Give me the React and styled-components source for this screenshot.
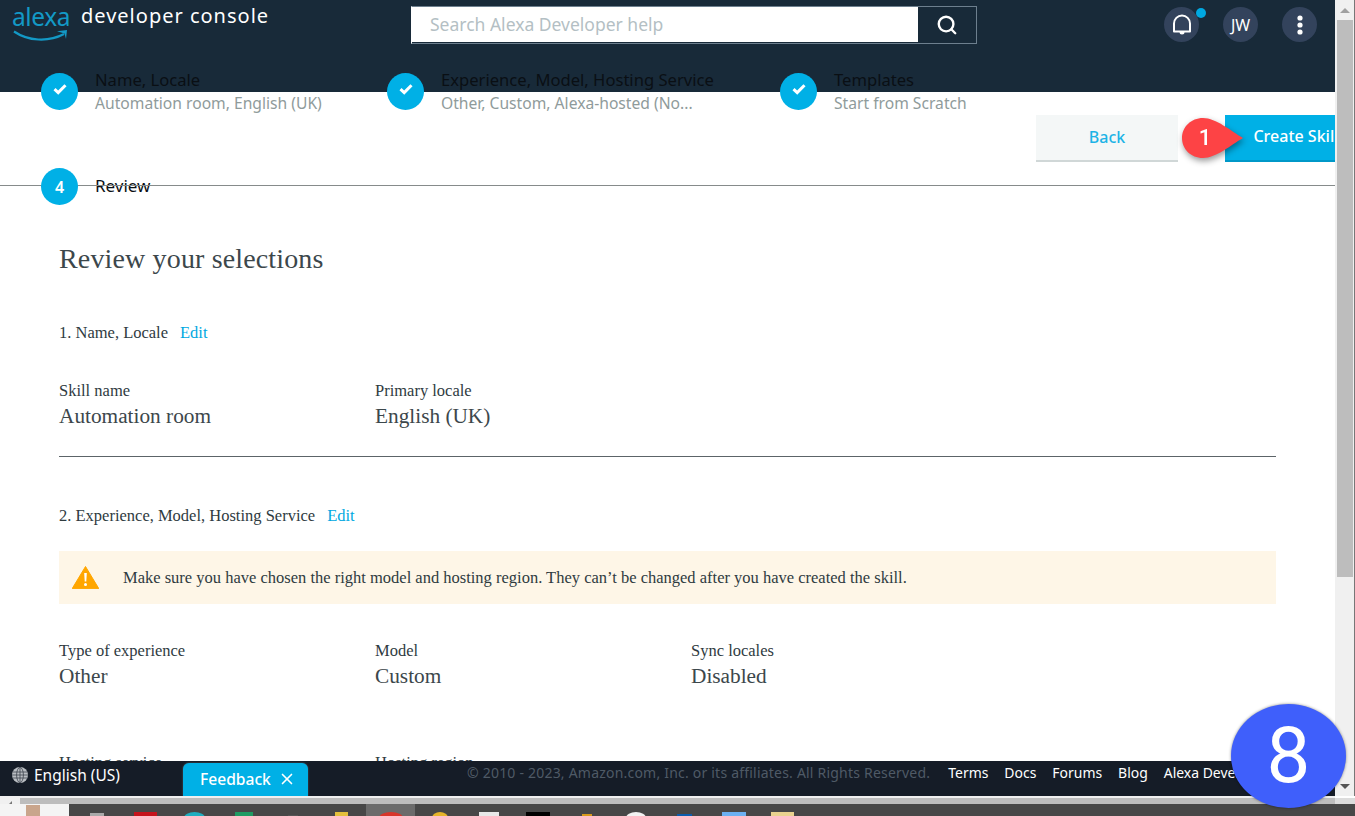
import React from "react";
import styled, { createGlobalStyle } from "styled-components";
import { Search, X } from "lucide-react";

const GlobalStyle = createGlobalStyle`
  html, body {
    margin: 0;
    padding: 0;
    background: #fff;
    overflow: hidden;
  }
  * {
    box-sizing: border-box;
  }
`;

const UI_FONT = `"Noto Sans", "Open Sans", sans-serif`;
const SERIF_FONT = `"Liberation Serif", serif`;

const Screen = styled.div`
  position: relative;
  width: 1355px;
  height: 816px;
  overflow: hidden;
  display: flex;
  flex-direction: column;
  font-family: ${UI_FONT};
`;

const Viewport = styled.div`
  flex: none;
  display: flex;
  height: 796px;
`;

const Page = styled.div`
  width: 1335px;
  display: flex;
  flex-direction: column;
  overflow: hidden;
`;

const Header = styled.header`
  flex: none;
  height: 92px;
  background: #182a39;
  display: flex;
  align-items: flex-start;
`;

const Logo = styled.div`
  position: relative;
  flex: none;
  width: 81px;
  padding-left: 12px;
  height: 44px;
  color: #1399c6;
  font-size: 24.5px;
  line-height: 34px;
  letter-spacing: -0.4px;
`;

const Smile = styled.svg`
  position: absolute;
  left: 12px;
  top: 28px;
`;

const ConsoleName = styled.div`
  flex: none;
  width: 330px;
  color: #fff;
  font-size: 20px;
  line-height: 32px;
  letter-spacing: 1px;
`;

const SearchBox = styled.div`
  margin-top: 6px;
  width: 566px;
  height: 38px;
  border: 1px solid #6d7f8e;
  border-left-color: #fff;
  display: flex;
`;

const SearchField = styled.div`
  width: 506px;
  height: 35px;
  background: #fff;
  color: #b4bfc4;
  font-size: 17.5px;
  line-height: 35px;
  padding-left: 18px;
`;

const SearchButton = styled.div`
  flex: 1;
  display: flex;
  align-items: center;
  justify-content: center;
  color: #fff;
`;

const HeaderTools = styled.div`
  margin-left: 187px;
  margin-top: 7px;
  display: flex;
  gap: 24px;
`;

const ToolButton = styled.div`
  position: relative;
  width: 35px;
  height: 35px;
  border-radius: 50%;
  background: #33435c;
  color: #fff;
  font-size: 16px;
  display: flex;
  align-items: center;
  justify-content: center;
`;

const NotifyDot = styled.span`
  position: absolute;
  top: 1px;
  right: -7px;
  width: 10px;
  height: 10px;
  border-radius: 50%;
  background: #00a8e1;
`;

const Stepper = styled.div`
  position: relative;
  flex: none;
  margin-top: -20px;
  height: 43px;
  padding-left: 41px;
  display: flex;
`;

const Step = styled.div`
  width: ${(p) => p.$width}px;
  display: flex;
  align-items: flex-start;
`;

const StepCircle = styled.div`
  flex: none;
  width: 37px;
  height: 37px;
  margin-top: 1px;
  border-radius: 50%;
  background: #00b0e6;
  color: #fff;
  font-size: 16px;
  font-weight: 600;
  display: flex;
  align-items: center;
  justify-content: center;
`;

const StepText = styled.div`
  margin-left: 17px;
  min-width: 0;
`;

const StepTitle = styled.div`
  color: #0a0f14;
  font-size: 16.6px;
  line-height: 24px;
  margin-top: -4px;
  white-space: nowrap;
`;

const StepDetail = styled.div`
  color: #8f9b9b;
  font-size: 15.65px;
  line-height: 23px;
  white-space: nowrap;
`;

const Actions = styled.div`
  position: relative;
  flex: none;
  height: 47px;
  margin-right: -32px;
  display: flex;
  justify-content: flex-end;
  gap: 47px;
`;

const ActionButton = styled.div`
  width: 142px;
  height: 47px;
  background: ${(p) => (p.$primary ? "#00b0e6" : "#f4f7f7")};
  border-bottom: 2px solid ${(p) => (p.$primary ? "#0098c8" : "#d0d7d7")};
  color: ${(p) => (p.$primary ? "#fff" : "#1cb3e6")};
  font-size: 16px;
  font-weight: 500;
  line-height: ${(p) => (p.$primary ? 42 : 44)}px;
  text-align: center;
`;

const Callout = styled.div`
  position: absolute;
  left: 1181px;
  top: 2px;
  width: 64px;
  height: 42px;
  filter: drop-shadow(1px 3px 3px rgba(0, 0, 0, 0.4));
`;

const CalloutNumber = styled.span`
  position: absolute;
  left: 16px;
  top: 5px;
  width: 16px;
  color: #fff;
  font-family: Roboto, sans-serif;
  font-size: 22px;
  font-weight: 500;
  line-height: 32px;
  text-align: center;
`;

const ReviewStep = styled.div`
  position: relative;
  flex: none;
  margin-top: 6px;
  height: 37px;
  padding-left: 41px;
  display: flex;
  align-items: center;

  &::after {
    content: "";
    position: absolute;
    left: 0;
    right: 0;
    top: 17px;
    height: 1px;
    background: #868b8b;
  }
`;

const ReviewStepLabel = styled.span`
  position: relative;
  margin: -2px 0 0 17px;
  color: #0a0f14;
  font-size: 17px;
`;

const FrontCircle = styled(StepCircle)`
  position: relative;
  z-index: 1;
  margin-top: 0;
`;

const Review = styled.main`
  flex: 1;
  min-height: 0;
  overflow: hidden;
  padding: 0 59px;
  font-family: ${SERIF_FONT};
  color: #2f3b3f;
`;

const ReviewTitle = styled.h1`
  margin: 36px 0 0;
  color: #3c474b;
  font-size: 28px;
  font-weight: 400;
  line-height: 36px;
  letter-spacing: 0.15px;
`;

const SectionHeading = styled.div`
  margin-top: ${(p) => p.$top}px;
  font-size: 16.5px;
  line-height: 20px;
  display: flex;
  gap: 12px;
`;

const EditLink = styled.a`
  color: #00a8e1;
  text-decoration: none;
`;

const FieldRow = styled.div`
  margin-top: ${(p) => p.$top}px;
  display: grid;
  grid-template-columns: repeat(3, 316px);
`;

const FieldLabel = styled.div`
  font-size: 16.5px;
  line-height: 22px;
`;

const FieldValue = styled.div`
  color: #3c474b;
  font-size: 21.3px;
  line-height: 29px;
`;

const Divider = styled.hr`
  margin: 25px 0 0;
  border: 0;
  border-top: 1px solid #5c6468;
`;

const Notice = styled.div`
  margin-top: 25px;
  height: 53px;
  background: #fef6e7;
  padding-left: 13px;
  display: flex;
  align-items: center;
  gap: 24px;
  font-size: 16.5px;
`;

const Footer = styled.footer`
  position: relative;
  flex: none;
  height: 35px;
  background: #151c27;
  display: flex;
  white-space: nowrap;
  overflow: hidden;
`;

const Language = styled.div`
  width: 183px;
  padding-left: 12px;
  height: 28px;
  display: flex;
  align-items: center;
  gap: 6px;
  color: #fff;
  font-size: 15.5px;
`;

const FeedbackTab = styled.div`
  align-self: flex-end;
  width: 125px;
  height: 33px;
  padding: 0 0 2px 17px;
  background: #00b0e6;
  border-radius: 6px 6px 0 0;
  box-shadow: 0 0 2px rgba(255, 255, 255, 0.3);
  color: #fff;
  font-size: 15.6px;
  font-weight: 500;
  display: flex;
  align-items: center;
  gap: 7px;
`;

const Copyright = styled.div`
  margin-left: 159px;
  height: 24px;
  line-height: 24px;
  color: #4f5a66;
  font-size: 14px;
  letter-spacing: 0.21px;
`;

const FooterLinks = styled.nav`
  margin-left: 18px;
  display: flex;
  gap: 16px;
`;

const FooterLink = styled.a`
  color: #fff;
  font-size: 13.95px;
  line-height: 24px;
  text-decoration: none;
`;

const VerticalScrollbar = styled.div`
  width: 20px;
  background: #f0f0f0;
  border-right: 1px solid #777;
  display: flex;
  flex-direction: column;
  align-items: center;
`;

const ScrollArrow = styled.span`
  flex: none;
  height: 20px;
  width: 100%;
  display: flex;
  align-items: center;
  justify-content: center;

  &::before {
    content: "";
    border-left: 5px solid transparent;
    border-right: 5px solid transparent;
    ${(p) => (p.$down ? "border-top: 5px solid #555;" : "border-bottom: 5px solid #a0a0a0;")}
  }
`;

const ScrollThumb = styled.div`
  flex: none;
  width: 16px;
  height: 557px;
  background: #bdbdbd;
`;

const ScrollSpacer = styled.div`
  flex: 1;
`;

const StripRow = styled.div`
  flex: none;
  height: 2px;
  width: 1335px;
  background: #f0f0f0;
`;

const HorizontalScrollbar = styled.div`
  flex: none;
  display: flex;
  height: 6px;
  background: #bdbdbd;
`;

const ScrollCorner = styled.div`
  flex: none;
  width: 20px;
  background: #f0f0f0;
  display: flex;
  align-items: flex-end;
  justify-content: center;

  &::before {
    content: "";
    border-bottom: 3px solid #777;
    border-left: 3px solid transparent;
  }
`;

const ScrollEnd = styled.div`
  flex: none;
  margin-left: auto;
  width: 20px;
  background: #dcdcdc;
`;

const Taskbar = styled.div`
  flex: 1;
  display: flex;
  background: #474747;
  overflow: hidden;
`;

const StartArea = styled.div`
  flex: none;
  width: 69px;
  margin-right: 3px;
  background: #f4f4f4;
  padding: 1px 0 0 26px;
`;

const TaskTile = styled.div`
  flex: none;
  width: 49px;
  padding-top: ${(p) => p.$offset}px;
  display: flex;
  justify-content: center;
  background: ${(p) => (p.$active ? "#6b6b6b" : "transparent")};
`;

const TaskIcon = styled.span`
  display: block;
  width: ${(p) => p.$size}px;
  height: 12px;
  background: ${(p) => p.$color};
  border-radius: ${(p) => (p.$round ? "50% 50% 0 0" : "0")};
`;

const Badge = styled.div`
  position: absolute;
  left: 1231px;
  top: 704px;
  width: 115px;
  height: 104px;
  border-radius: 50%;
  background: #3f5ffb;
  box-shadow: 0 0 3px rgba(0, 0, 0, 0.45);
  color: #fff;
  font-family: Roboto, sans-serif;
  font-size: 78px;
  line-height: 104px;
  text-align: center;
`;

const CheckMark = () => (
  <svg width="14" height="12" viewBox="0 0 14 12" style={{ marginTop: -5 }}>
    <path d="M1.5 6.2 5.2 9.6 12.5 2.2" fill="none" stroke="#fff" strokeWidth="3" />
  </svg>
);

const Bell = () => (
  <svg width="20" height="22" viewBox="0 0 20 22">
    <path
      d="M2 17.5V9.5a8 8 0 0 1 16 0v8z"
      fill="none"
      stroke="#fff"
      strokeWidth="2"
      strokeLinejoin="round"
    />
    <path d="M7.500 18h5a2.500 2.500 0 0 1-5 0z" fill="#fff" />
  </svg>
);

const MoreDots = () => (
  <svg width="8" height="20" viewBox="0 0 8 20">
    <circle cx="4" cy="3" r="2.6" fill="#fff" />
    <circle cx="4" cy="10" r="2.6" fill="#fff" />
    <circle cx="4" cy="17" r="2.6" fill="#fff" />
  </svg>
);

const Globe = () => (
  <svg width="16" height="16" viewBox="0 0 16 16">
    <circle cx="8" cy="8" r="8" fill="#b9bdc2" />
    <g fill="none" stroke="#3d444e" strokeWidth="0.8">
      <ellipse cx="8" cy="8" rx="3.4" ry="7.6" />
      <path d="M8 0v16M0.6 5h14.8M0.6 11h14.8M0 8h16" />
    </g>
  </svg>
);

const WarningIcon = () => (
  <svg width="27" height="23" viewBox="0 0 27 23">
    <path d="M13.5 0.5 26.8 22.6H0.2z" fill="#ffa600" stroke="#ffa600" strokeLinejoin="round" />
    <path d="M12.2 7h2.6l-.5 8.6h-1.6z" fill="#fff" />
    <circle cx="13.5" cy="18.4" r="1.5" fill="#fff" />
  </svg>
);

const taskIcons = [
  { size: 14, color: "#a9a9a9", offset: 9 },
  { size: 23, color: "#c5131c", offset: 8 },
  { size: 21, color: "#1eaec0", offset: 8, round: true },
  { size: 18, color: "#1f9b63", offset: 8 },
  { size: 10, color: "#555", offset: 11 },
  { size: 13, color: "#e3bf3b", offset: 8 },
  { size: 24, color: "#d8352a", offset: 8, round: true, active: true },
  { size: 16, color: "#e6b42a", offset: 8, round: true },
  { size: 20, color: "#e8e8e8", offset: 8 },
  { size: 24, color: "#000", offset: 8 },
  { size: 10, color: "#d89a1c", offset: 10 },
  { size: 20, color: "#f2f2f2", offset: 8, round: true },
  { size: 15, color: "#0b5cad", offset: 10 },
  { size: 24, color: "#6bb0f2", offset: 8 },
  { size: 23, color: "#e9d28f", offset: 8 },
];

const footerLinks = ["Terms", "Docs", "Forums", "Blog", "Alexa Developer"];

export default function App() {
  return (
    <Screen>
      <GlobalStyle />
      <Viewport>
        <Page>
          <Header>
            <Logo>
              alexa
              <Smile width="56" height="14" viewBox="0 0 56 14">
                <path d="M2 3.500C16 13 36 14.500 52 6" fill="none" stroke="#1399c6" strokeWidth="2.2" />
                <path d="M45 3.200 55 2 54 11 52.500 5.500z" fill="#1399c6" />
              </Smile>
            </Logo>
            <ConsoleName>developer console</ConsoleName>
            <SearchBox>
              <SearchField>Search Alexa Developer help</SearchField>
              <SearchButton>
                <Search size={22} strokeWidth={2.6} />
              </SearchButton>
            </SearchBox>
            <HeaderTools>
              <ToolButton>
                <Bell />
                <NotifyDot />
              </ToolButton>
              <ToolButton>JW</ToolButton>
              <ToolButton>
                <MoreDots />
              </ToolButton>
            </HeaderTools>
          </Header>

          <Stepper>
            <Step $width={346}>
              <StepCircle>
                <CheckMark />
              </StepCircle>
              <StepText>
                <StepTitle>Name, Locale</StepTitle>
                <StepDetail>Automation room, English (UK)</StepDetail>
              </StepText>
            </Step>
            <Step $width={393}>
              <StepCircle>
                <CheckMark />
              </StepCircle>
              <StepText>
                <StepTitle>Experience, Model, Hosting Service</StepTitle>
                <StepDetail>Other, Custom, Alexa-hosted (No...</StepDetail>
              </StepText>
            </Step>
            <Step $width={300}>
              <StepCircle>
                <CheckMark />
              </StepCircle>
              <StepText>
                <StepTitle>Templates</StepTitle>
                <StepDetail>Start from Scratch</StepDetail>
              </StepText>
            </Step>
          </Stepper>

          <Actions>
            <ActionButton>Back</ActionButton>
            <ActionButton $primary>Create Skill</ActionButton>
            <Callout>
              <svg width="64" height="42" viewBox="0 0 64 42">
                <path
                  d="M22 1C35 1 50 14 62 21 50 28 35 41 22 41 10 41 1 32 1 21S10 1 22 1z"
                  fill="#fd4345"
                />
              </svg>
              <CalloutNumber>1</CalloutNumber>
            </Callout>
          </Actions>

          <ReviewStep>
            <FrontCircle>4</FrontCircle>
            <ReviewStepLabel>Review</ReviewStepLabel>
          </ReviewStep>

          <Review>
            <ReviewTitle>Review your selections</ReviewTitle>

            <SectionHeading $top={46}>
              1. Name, Locale <EditLink href="#">Edit</EditLink>
            </SectionHeading>
            <FieldRow $top={37}>
              <div>
                <FieldLabel>Skill name</FieldLabel>
                <FieldValue>Automation room</FieldValue>
              </div>
              <div>
                <FieldLabel>Primary locale</FieldLabel>
                <FieldValue>English (UK)</FieldValue>
              </div>
            </FieldRow>
            <Divider />

            <SectionHeading $top={49}>
              2. Experience, Model, Hosting Service <EditLink href="#">Edit</EditLink>
            </SectionHeading>
            <Notice>
              <WarningIcon />
              Make sure you have chosen the right model and hosting region. They can’t be changed
              after you have created the skill.
            </Notice>
            <FieldRow $top={36}>
              <div>
                <FieldLabel>Type of experience</FieldLabel>
                <FieldValue>Other</FieldValue>
              </div>
              <div>
                <FieldLabel>Model</FieldLabel>
                <FieldValue>Custom</FieldValue>
              </div>
              <div>
                <FieldLabel>Sync locales</FieldLabel>
                <FieldValue>Disabled</FieldValue>
              </div>
            </FieldRow>
            <FieldRow $top={61}>
              <FieldLabel>Hosting service</FieldLabel>
              <FieldLabel>Hosting region</FieldLabel>
            </FieldRow>
          </Review>

          <Footer>
            <Language>
              <Globe />
              English (US)
            </Language>
            <FeedbackTab>
              Feedback
              <X size={18} strokeWidth={2.2} />
            </FeedbackTab>
            <Copyright>© 2010 - 2023, Amazon.com, Inc. or its affiliates. All Rights Reserved.</Copyright>
            <FooterLinks>
              {footerLinks.map((link) => (
                <FooterLink href="#" key={link}>
                  {link}
                </FooterLink>
              ))}
            </FooterLinks>
          </Footer>
        </Page>
        <VerticalScrollbar>
          <ScrollArrow />
          <ScrollThumb />
          <ScrollSpacer />
          <ScrollArrow $down />
        </VerticalScrollbar>
      </Viewport>
      <StripRow />
      <HorizontalScrollbar>
        <ScrollCorner />
        <ScrollEnd />
      </HorizontalScrollbar>
      <Taskbar>
        <StartArea>
          <TaskIcon $size={14} $color="#c9a58c" />
        </StartArea>
        {taskIcons.map((icon, i) => (
          <TaskTile key={i} $active={icon.active} $offset={icon.offset}>
            <TaskIcon $size={icon.size} $color={icon.color} $round={icon.round} />
          </TaskTile>
        ))}
      </Taskbar>
      <Badge>8</Badge>
    </Screen>
  );
}
